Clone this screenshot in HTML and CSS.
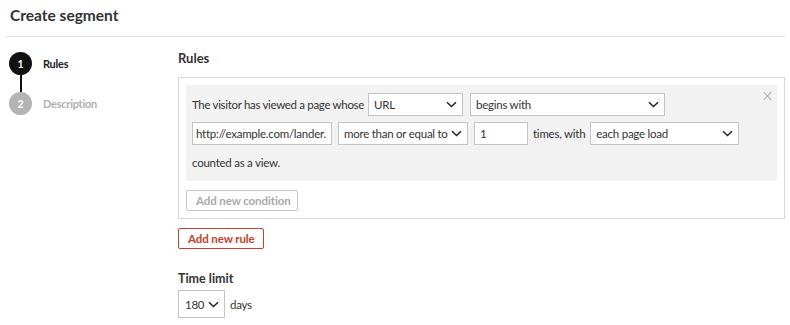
FILE: index.html
```html
<!DOCTYPE html>
<html>
<head>
<meta charset="utf-8">
<link rel="stylesheet" href="styles.css">
</head>
<body>
<header class="page-header">
  <h1 class="title">Create segment</h1>
</header>
<div class="layout">
  <aside class="steps">
    <div class="step active">
      <span class="step-num">1</span>
      <span class="step-label">Rules</span>
    </div>
    <div class="step-line"></div>
    <div class="step">
      <span class="step-num">2</span>
      <span class="step-label">Description</span>
    </div>
  </aside>
  <main class="main">
    <h2 class="section-title">Rules</h2>
    <div class="rule-box">
      <div class="condition">
        <span class="close">
          <svg width="9" height="8" viewBox="0 0 9 8"><path d="M0.7 0.3L8.3 7.7M8.3 0.3L0.7 7.7" stroke="#b8b8b8" stroke-width="1.3" fill="none"/></svg>
        </span>
        <div class="row">
          <span class="txt t-lead">The visitor has viewed a page whose</span>
          <div class="sel w-url"><span>URL</span><svg class="chev" width="11" height="7" viewBox="0 0 11 7"><path d="M1 1.2L5.5 5.5L10 1.2" stroke="#222" stroke-width="1.5" fill="none"/></svg></div>
          <div class="sel w-begins"><span>begins with</span><svg class="chev" width="11" height="7" viewBox="0 0 11 7"><path d="M1 1.2L5.5 5.5L10 1.2" stroke="#222" stroke-width="1.5" fill="none"/></svg></div>
        </div>
        <div class="row">
          <div class="inp w-url-in">http://example.com/lander.</div>
          <div class="sel w-more"><span>more than or equal to</span><svg class="chev" width="11" height="7" viewBox="0 0 11 7"><path d="M1 1.2L5.5 5.5L10 1.2" stroke="#222" stroke-width="1.5" fill="none"/></svg></div>
          <div class="inp w-num">1</div>
          <span class="txt t-times">times, with</span>
          <div class="sel w-load"><span>each page load</span><svg class="chev" width="11" height="7" viewBox="0 0 11 7"><path d="M1 1.2L5.5 5.5L10 1.2" stroke="#222" stroke-width="1.5" fill="none"/></svg></div>
        </div>
        <div class="row">
          <span class="txt">counted as a view.</span>
        </div>
      </div>
      <button class="btn btn-grey">Add new condition</button>
    </div>
    <button class="btn btn-red">Add new rule</button>
    <div class="time">
      <div class="time-label">Time limit</div>
      <div class="time-row">
        <div class="sel w-days"><span>180</span><svg class="chev" width="11" height="7" viewBox="0 0 11 7"><path d="M1 1.2L5.5 5.5L10 1.2" stroke="#222" stroke-width="1.5" fill="none"/></svg></div>
        <span class="txt">days</span>
      </div>
    </div>
  </main>
</div>
</body>
</html>
```
FILE: styles.css
```css
* { box-sizing: border-box; }
body {
  margin: 0;
  font-family: "Lato", "Noto Sans", sans-serif;
  font-size: 11.5px;
  letter-spacing: -0.25px;
  color: #333;
  background: #fff;
}
.page-header {
  margin: 0 5px;
  padding: 5px 5px 0;
  height: 37px;
  border-bottom: 1px solid #e3e3e3;
}
.title {
  margin: 0;
  font-size: 15.5px;
  font-weight: 700;
  letter-spacing: 0;
  color: #333;
  line-height: 20px;
}
.layout {
  display: flex;
}
.steps {
  width: 178px;
  flex: none;
  padding: 15px 0 0 9px;
}
.step {
  display: flex;
  align-items: center;
  height: 23px;
}
.step-num {
  width: 23px;
  height: 23px;
  border-radius: 50%;
  background: #b4b4b4;
  color: #fff;
  font-weight: 700;
  font-size: 10.5px;
  letter-spacing: 0;
  display: flex;
  align-items: center;
  justify-content: center;
}
.step.active .step-num { background: #111; }
.step-label {
  margin-left: 11px;
  font-weight: 700;
  color: #b0b0b0;
  font-size: 11px;
}
.step.active .step-label { color: #222; }
.step-line {
  width: 2px;
  height: 17px;
  background: #111;
  margin-left: 11px;
}
.main {
  flex: 1;
  padding-right: 5px;
}
.section-title {
  margin: 13px 0 0;
  font-size: 13px;
  font-weight: 700;
  letter-spacing: 0;
  color: #333;
  line-height: 16px;
}
.rule-box {
  margin-top: 11px;
  border: 1px solid #d9d9d9;
  padding: 7px;
}
.condition {
  position: relative;
  background: #f2f2f2;
  padding: 8px 6px 7px;
}
.close {
  position: absolute;
  right: 5px;
  top: 7px;
  display: block;
  width: 9px;
  height: 8px;
  line-height: 0;
}
.row {
  display: flex;
  align-items: center;
  height: 23px;
  margin-bottom: 6px;
}
.row:last-child { margin-bottom: 0; }
.txt {
  white-space: nowrap;
  flex: none;
}
.t-lead { letter-spacing: -0.32px; }
.sel, .inp {
  flex: none;
  height: 23px;
  background: #fff;
  border: 1px solid #c4c4c4;
  display: flex;
  align-items: center;
  padding: 0 5px;
  white-space: nowrap;
  color: #333;
  overflow: hidden;
}
.sel {
  justify-content: space-between;
}
.chev { flex: none; }
.w-url { width: 95px; margin-left: 4px; }
.w-begins { width: 195px; margin-left: 7px; }
.w-url-in { width: 140px; padding: 0 3px; }
.w-more { width: 130px; margin-left: 6px; padding-right: 5px; }
.w-num { width: 54px; margin-left: 6px; }
.t-times { margin-left: 5px; }
.w-load { width: 149px; margin-left: 5px; }
.btn {
  display: block;
  font-family: inherit;
  font-size: 11.5px;
  letter-spacing: -0.1px;
  font-weight: 700;
  background: #fff;
  height: 21px;
  padding: 0 9px;
  border-radius: 2px;
  white-space: nowrap;
  cursor: pointer;
}
.btn-grey {
  margin-top: 9px;
  border: 1px solid #c8c8c8;
  color: #aaa;
  width: 112px;
}
.btn-red {
  margin-top: 9px;
  border: 1px solid #c9402c;
  color: #c9402c;
  width: 86px;
}
.time {
  margin-top: 22px;
}
.time-label {
  font-weight: 700;
  font-size: 12.5px;
  letter-spacing: 0;
  color: #333;
  line-height: 16px;
}
.time-row {
  display: flex;
  align-items: center;
  margin-top: 3px;
}
.w-days {
  width: 47px;
  height: 28px;
  padding: 0 5px 0 6px;
}
.time-row .txt { margin-left: 5px; }
```
